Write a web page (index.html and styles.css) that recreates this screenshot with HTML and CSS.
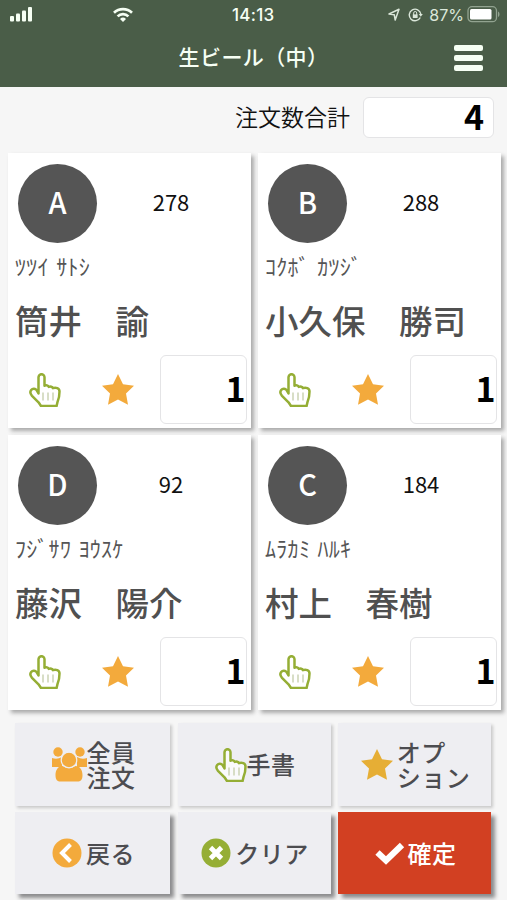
FILE: index.html
```html
<!DOCTYPE html>
<html lang="ja">

<head>
    <meta charset="utf-8">
    <title>生ビール（中）</title>
    <link rel="stylesheet" href="styles.css">
</head>

<body>
    <svg class="defs" width="0" height="0">
        <symbol id="hand" viewBox="0 0 32 34">
            <path d="M9.500 20.500V4.200a3 3 0 0 1 6 0v8.600c1.600-1 3.600-.4 4.200 1.100 1.600-.8 3.600-.2 4.300 1.300 2.800-1.200 6.500.2 6.500 3.200 0 4.600-.6 7.500-2 10.600l-.9 4H12L9.500 29.300 3 22.800c-1.700-1.900-2-4.300-.8-5.900 1.400-1.800 4.200-1.500 5.400.2z" fill="#fff" fill-opacity=".7" stroke="#95ae35" stroke-width="2.500" stroke-linejoin="round" />
            <path d="M14 19.500v8M19 19.500v8M24 19.500v8" stroke="#cbd3b4" stroke-width="1.500" />
        </symbol>
        <symbol id="star" viewBox="0 0 32 31">
            <path d="M16 0l5 10.300 11 1.500-8 7.800 2 11.200-10-5.300-10 5.300 2-11.200-8-7.800 11-1.500z" />
        </symbol>
    </svg>
    <div class="header">
        <div class="status">
            <svg class="signal" width="24" height="15" viewBox="0 0 24 15" fill="#f6fff4">
                <rect x="0" y="9" width="4" height="5.500" rx="1" />
                <rect x="6" y="6.500" width="4" height="8" rx="1" />
                <rect x="12" y="3.500" width="4" height="11" rx="1" />
                <rect x="18" y="0" width="4" height="14.500" rx="1" />
            </svg>
            <svg class="wifi" width="22" height="16" viewBox="0 0 22 16" fill="none" stroke="#f6fff4" stroke-width="2.700">
                <path d="M2 5.700a13 13 0 0 1 18 0M5.600 9.400a7.700 7.700 0 0 1 10.800 0" />
                <path d="M11 15l-3-3a4.300 4.300 0 0 1 6 0z" fill="#f6fff4" stroke="none" />
            </svg>
            <span class="time">14:13</span>
            <div class="status-right">
                <svg width="12" height="13" viewBox="0 0 12 13" fill="none" stroke="#dbe7da" stroke-width="1.500" stroke-linejoin="round">
                    <path d="M1 6L11 1.200 7.200 12 6.300 6.800z" />
                </svg>
                <svg class="lock" width="15" height="14" viewBox="0 0 15 14" fill="none" stroke="#dbe7da" stroke-width="1.400">
                    <path d="M12.300 9.500a5.800 5.800 0 1 1 .5-3.500" />
                    <path d="M10.800 6h4l-2 2.800z" fill="#dbe7da" stroke="none" />
                    <rect x="4.800" y="6.400" width="4.800" height="3.600" fill="#dbe7da" stroke="none" />
                    <path d="M5.700 7V5a1.500 1.500 0 0 1 3 0v2" stroke-width="1" />
                </svg>
                <span class="percent">87%</span>
                <svg width="33" height="17" viewBox="0 0 33 17">
                    <rect x="1" y=".7" width="28.500" height="15" rx="4" fill="none" stroke="#92a390" stroke-width="1.300" />
                    <rect x="3" y="3" width="21.500" height="10.500" rx="1.500" fill="#fff" />
                    <path d="M31 5.500c2 .8 2 4.700 0 5.500z" fill="#92a390" />
                </svg>
            </div>
        </div>
        <div class="nav">
            <h1 class="title">生ビール（中）</h1>
            <div class="menu">
                <span class="bar"></span>
                <span class="bar"></span>
                <span class="bar"></span>
            </div>
        </div>
    </div>

    <div class="total">
        <span class="total-label">注文数合計</span>
        <div class="total-num">4</div>
    </div>

    <div class="cards">
        <div class="card">
            <div class="card-top">
                <div class="mark">A</div>
                <div class="no">278</div>
            </div>
            <div class="kana">ﾂﾂｲ ｻﾄｼ</div>
            <div class="name">筒井　諭</div>
            <div class="card-bottom">
                <svg class="hand"><use href="#hand" /></svg>
                <svg class="star"><use href="#star" /></svg>
                <div class="num">1</div>
            </div>
        </div>
        <div class="card">
            <div class="card-top">
                <div class="mark">B</div>
                <div class="no">288</div>
            </div>
            <div class="kana">ｺｸﾎﾞ ｶﾂｼﾞ</div>
            <div class="name">小久保　勝司</div>
            <div class="card-bottom">
                <svg class="hand"><use href="#hand" /></svg>
                <svg class="star"><use href="#star" /></svg>
                <div class="num">1</div>
            </div>
        </div>
        <div class="card">
            <div class="card-top">
                <div class="mark">D</div>
                <div class="no">92</div>
            </div>
            <div class="kana">ﾌｼﾞｻﾜ ﾖｳｽｹ</div>
            <div class="name">藤沢　陽介</div>
            <div class="card-bottom">
                <svg class="hand"><use href="#hand" /></svg>
                <svg class="star"><use href="#star" /></svg>
                <div class="num">1</div>
            </div>
        </div>
        <div class="card">
            <div class="card-top">
                <div class="mark">C</div>
                <div class="no">184</div>
            </div>
            <div class="kana">ﾑﾗｶﾐ ﾊﾙｷ</div>
            <div class="name">村上　春樹</div>
            <div class="card-bottom">
                <svg class="hand"><use href="#hand" /></svg>
                <svg class="star"><use href="#star" /></svg>
                <div class="num">1</div>
            </div>
        </div>
    </div>

    <div class="btn-box">
        <div class="btn">
            <svg width="35" height="35" viewBox="0 0 35 35" fill="#f3aa3c">
                <circle cx="6" cy="5" r="4.700" />
                <circle cx="28" cy="5" r="4.700" />
                <path d="M0 11q5 2 10-1v10H0zM35 11q-5 2-10-1v10h10z" />
                <path d="M3.500 28c0-5 2.500-9 7-9q6.500 4 13 0c4.500 0 7 4 7 9 0 5-2 6.500-5 6.500h-17c-3 0-5-1.500-5-6.500z" />
                <circle cx="17" cy="13" r="7.800" stroke="#eeeef2" stroke-width="1.200" />
            </svg>
            <span>全員<br>注文</span>
        </div>
        <div class="btn btn-hand">
            <svg class="hand"><use href="#hand" /></svg>
            <span>手書</span>
        </div>
        <div class="btn btn-option">
            <svg class="star"><use href="#star" /></svg>
            <span>オプ<br>ション</span>
        </div>
        <div class="btn low">
            <svg width="30" height="30" viewBox="0 0 30 30">
                <circle cx="15" cy="15" r="14.500" fill="#f3aa3c" />
                <path d="M18.500 6.500L10 15l8.500 8.500" fill="none" stroke="#fff" stroke-width="4" />
            </svg>
            <span class="back">戻る</span>
        </div>
        <div class="btn low btn-clear">
            <svg width="30" height="30" viewBox="0 0 30 30">
                <circle cx="15" cy="15" r="14.500" fill="#95ae35" />
                <path d="M9.500 9.500l11 11M20.500 9.500l-11 11" fill="none" stroke="#fff" stroke-width="4.800" />
            </svg>
            <span>クリア</span>
        </div>
        <div class="btn low btn-ok">
            <svg width="30" height="24" viewBox="0 0 30 24">
                <path d="M2.500 11.500l8.500 8L27 4" fill="none" stroke="#fff" stroke-width="6.200" />
            </svg>
            <span>確定</span>
        </div>
    </div>
</body>

</html>
```
FILE: styles.css
```css
* {
    box-sizing: border-box;
}

body {
    margin: 0;
    height: 900px;
    overflow: hidden;
    background-color: #f6f6f6;
    font-family: "Noto Sans CJK JP", sans-serif;
    color: #111;
}

svg {
    display: block;
    flex: none;
}

.defs {
    position: absolute;
}

.header {
    height: 87px;
    background-color: #4a5d48;
    color: #f6fff4;
}

.status {
    display: flex;
    align-items: center;
    height: 29px;
    padding: 0 7px 0 10px;
    font-family: Inter, sans-serif;
    font-size: 17px;
}

.wifi {
    margin-left: 78px;
}

.time {
    margin-left: 98px;
    font-weight: 500;
    letter-spacing: 0.3px;
}

.status-right {
    display: flex;
    align-items: center;
    margin-left: auto;
    color: #dbe7da;
}

.lock {
    margin-left: 8px;
}

.percent {
    margin: 0 3px 0 6px;
    font-size: 16px;
}

.nav {
    display: grid;
    grid-template-columns: 1fr auto 1fr;
    align-items: center;
    height: 57px;
    padding: 0 23px;
}

.title {
    grid-column: 2;
    margin: -3px 0 0;
    font-size: 21px;
    font-weight: 500;
    letter-spacing: 0.4px;
}

.menu {
    display: grid;
    gap: 4px;
    justify-self: end;
    margin-right: 1px;
}

.bar {
    width: 29px;
    height: 6px;
    border-radius: 2px;
    background-color: #f6fff4;
}

.total {
    display: flex;
    align-items: center;
    justify-content: flex-end;
    height: 66px;
    padding: 0 13px 6px 0;
}

.total-label {
    margin-right: 13px;
    padding-bottom: 3px;
    font-size: 23px;
    font-weight: 350;
}

.total-num,
.num {
    display: flex;
    align-items: center;
    justify-content: flex-end;
    padding-bottom: 3px;
    border: 1px solid #e4e4e6;
    border-radius: 6px;
    background-color: #fff;
    color: #000;
    font-size: 34px;
    font-weight: 700;
    line-height: 1;
}

.total-num {
    width: 131px;
    height: 41px;
    padding-right: 9px;
}

.cards {
    display: grid;
    grid-template-columns: 242.5px 242.5px;
    gap: 7px 7.5px;
    padding-left: 8px;
}

.card {
    height: 275px;
    padding: 11px 4px 0 7px;
    background-color: #fff;
    box-shadow: 3px 3px 4px #aaa;
}

.card-top {
    display: flex;
    align-items: center;
    padding-left: 3px;
}

.mark {
    width: 79px;
    height: 79px;
    border-radius: 50%;
    background-color: #555;
    color: #fff;
    font-size: 29px;
    font-weight: 500;
    line-height: 75px;
    text-align: center;
}

.no {
    width: 148px;
    padding-bottom: 5px;
    font-size: 22px;
    text-align: center;
}

.kana {
    height: 50px;
    color: #555;
    font-size: 22px;
    font-weight: 400;
    letter-spacing: 0.3px;
    line-height: 45px;
    word-spacing: 2px;
    white-space: nowrap;
}

.name {
    height: 57px;
    color: #505050;
    font-size: 33.5px;
    font-weight: 500;
    line-height: 53px;
    white-space: nowrap;
}

.card-bottom {
    display: flex;
    align-items: center;
    margin-top: 5px;
    padding-left: 14px;
}

.hand {
    width: 32px;
    height: 34px;
}

.star {
    width: 32px;
    height: 31px;
    margin-left: 41px;
    fill: #f3aa3c;
}

.num {
    width: 87px;
    height: 69px;
    margin-left: auto;
}

.btn-box {
    display: grid;
    grid-template-columns: 155px 153px 153px;
    grid-template-rows: 83px 82px;
    column-gap: 7.5px;
    row-gap: 6px;
    padding: 13px 0 0 15px;
}

.btn {
    display: flex;
    align-items: center;
    justify-content: center;
    padding-left: 2px;
    background-color: #eeeef2;
    box-shadow: 2px 2px 3px #c8c8c8;
    color: #4c4c50;
    font-size: 24px;
    font-weight: 500;
    letter-spacing: 0.5px;
    line-height: 25px;
}

.btn span {
    padding-bottom: 2px;
}

.low {
    box-shadow: 4px 4px 4px #8b8b8d;
}

.btn .star {
    margin: 0 4px 0 0;
    fill: #e6ae35;
}

.back,
.btn-clear span {
    margin-left: 4px;
}

.btn-ok {
    background-color: #d24022;
    color: #fff;
}

.btn-ok span {
    margin-left: 3px;
}
```
